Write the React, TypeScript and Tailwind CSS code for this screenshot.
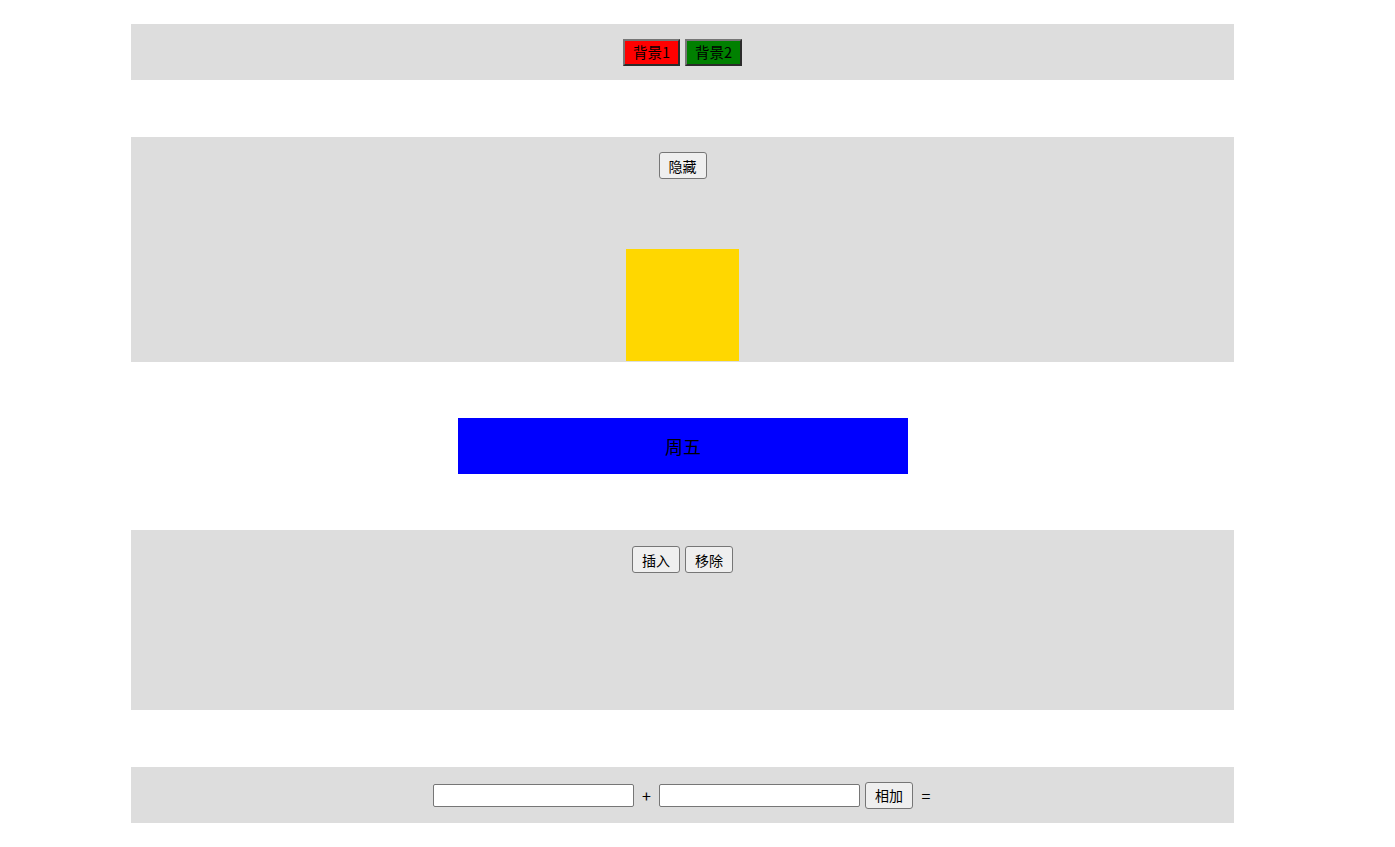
import React from "react";

const font = { fontFamily: '"Noto Sans CJK SC", "Liberation Sans", sans-serif' };

function Btn({ children, className = "" }: { children: React.ReactNode; className?: string }) {
  return (
    <button
      className={
        "h-[27px] w-[48px] rounded-[3px] border border-[#767676] bg-[#efefef] text-[14px] leading-none text-black flex items-center justify-center " +
        className
      }
    >
      {children}
    </button>
  );
}

function ColorBtn({ children, bg }: { children: React.ReactNode; bg: string }) {
  return (
    <button
      className={
        "h-[27px] w-[57px] border-2 border-t-[#767676] border-l-[#767676] border-b-[#2b2b2b] border-r-[#2b2b2b] text-[14.5px] leading-none text-black flex items-center justify-center " +
        bg
      }
    >
      {children}
    </button>
  );
}

export default function App() {
  return (
    <div className="w-[1395px] min-h-[847px] bg-white pt-[24px]" style={font}>
      <div className="ml-[131px] w-[1103px] h-[56px] bg-[#dddddd] flex items-center justify-center gap-[5px]">
        <ColorBtn bg="bg-[#ff0000]">背景1</ColorBtn>
        <ColorBtn bg="bg-[#008000]">背景2</ColorBtn>
      </div>

      <div className="ml-[131px] mt-[57px] w-[1103px] h-[225px] bg-[#dddddd] flex flex-col items-center pt-[15px]">
        <Btn>隐藏</Btn>
        <div className="mt-[70px] w-[113px] h-[112px] bg-[#ffd700]" />
      </div>

      <div className="ml-[458px] mt-[56px] w-[450px] h-[56px] bg-[#0000ff] flex items-center justify-center text-[18px] text-black">
        周五
      </div>

      <div className="ml-[131px] mt-[56px] w-[1103px] h-[180px] bg-[#dddddd] flex justify-center gap-[5px] pt-[16px]">
        <Btn>插入</Btn>
        <Btn>移除</Btn>
      </div>

      <div className="ml-[131px] mt-[57px] w-[1103px] h-[56px] bg-[#dddddd] flex items-center justify-center text-[16px] text-black">
        <input className="w-[201px] h-[23px] bg-white border border-[#767676] rounded-[2px]" />
        <span className="w-[25px] text-center">+</span>
        <input className="w-[201px] h-[23px] bg-white border border-[#767676] rounded-[2px]" />
        <Btn className="ml-[5px]">相加</Btn>
        <span className="ml-[7px] w-[12px] text-center">=</span>
      </div>
    </div>
  );
}
